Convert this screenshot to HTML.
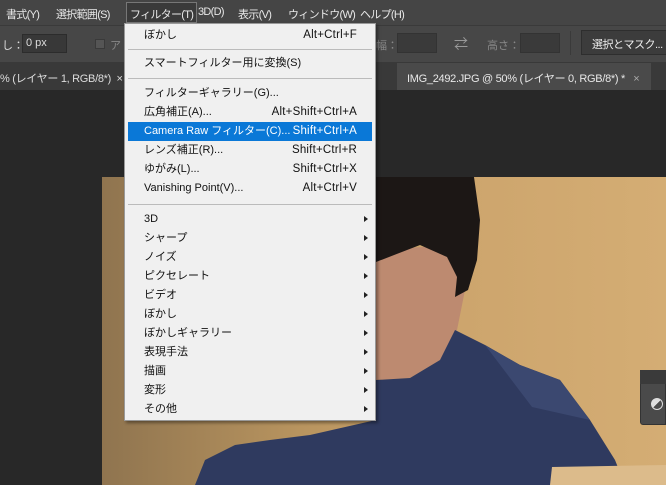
<!DOCTYPE html>
<html><head><meta charset="utf-8"><style>
*{margin:0;padding:0;box-sizing:border-box}
body{width:666px;height:485px;overflow:hidden;background:#282828;font-family:"Liberation Sans","Noto Sans CJK JP",sans-serif;font-size:11px;position:relative}
.a{position:absolute}
.mb{left:0;top:0;width:666px;height:25px;background:#454545;color:#e8e8e8}
.mb span{position:absolute;top:6px;font-size:11px;letter-spacing:-0.7px;white-space:nowrap}
.ob{left:0;top:25px;width:666px;height:37px;background:#474747;border-top:1px solid #3a3a3a;color:#ddd}
.tb{left:0;top:62px;width:666px;height:28px;background:#393939;color:#ddd}
.menu{left:124px;top:23px;width:252px;height:398px;background:#f0f0f0;border:1px solid #999;box-shadow:2px 2px 3px rgba(0,0,0,.4);color:#111}
.it{position:absolute;left:0;width:250px;height:19px;line-height:19px;font-size:11px;white-space:nowrap}
.it .l{position:absolute;left:19px}
.it .r{position:absolute;right:18px;font-size:11.5px;letter-spacing:0.2px}
.it .ar{position:absolute;right:7px;top:6px;width:0;height:0;border-left:4px solid #222;border-top:3.5px solid transparent;border-bottom:3.5px solid transparent}
.sep{position:absolute;left:3px;width:244px;height:1px;background:#bbb}
</style></head><body>
<div class="a" style="left:582px;top:0;width:84px;height:3px;background:#555"></div>
<div class="a mb">
<span style="left:6px">書式(Y)</span><span style="left:56px">選択範囲(S)</span>
<span style="left:126px;top:2px;width:71px;height:21px;padding:3px 3px;border:1px solid #777;background:#3a3a3a">フィルター(T)</span>
<span style="left:198px">3D(D)</span><span style="left:238px">表示(V)</span><span style="left:288px">ウィンドウ(W)</span><span style="left:360px">ヘルプ(H)</span>
</div>
<div class="a ob">
<span class="a" style="left:2px;top:11px">し：</span>
<div class="a" style="left:22px;top:8px;width:45px;height:19px;background:#383838;border:1px solid #2c2c2c;padding:2px 3px;font-size:11px">0 px</div>
<div class="a" style="left:95px;top:13px;width:10px;height:10px;background:#555;border:1px solid #3a3a3a"></div>
<span class="a" style="left:110px;top:11px;color:#888">ア</span>
<span class="a" style="left:376px;top:11px;color:#888">幅：</span>
<div class="a" style="left:397px;top:7px;width:40px;height:20px;background:#3a3a3a;border:1px solid #333"></div>
<span class="a" style="left:454px;top:8px;color:#999;font-size:14px">⇄</span>
<span class="a" style="left:487px;top:11px;color:#888">高さ：</span>
<div class="a" style="left:520px;top:7px;width:40px;height:20px;background:#3a3a3a;border:1px solid #333"></div>
<div class="a" style="left:570px;top:5px;width:1px;height:24px;background:#3a3a3a"></div>
<div class="a" style="left:581px;top:4px;width:90px;height:25px;background:#3c3c3c;border:1px solid #2e2e2e;padding:5px 10px;color:#eee;white-space:nowrap;letter-spacing:-0.5px">選択とマスク...</div>
</div>
<div class="a tb">
<span class="a" style="left:0;top:8px;white-space:nowrap;letter-spacing:-0.3px">% (レイヤー 1, RGB/8*)&nbsp; ×</span>
<div class="a" style="left:397px;top:1px;width:254px;height:27px;background:#4a4a4a"></div>
<span class="a" style="left:407px;top:8px;white-space:nowrap;color:#e8e8e8;letter-spacing:-0.3px">IMG_2492.JPG @ 50% (レイヤー 0, RGB/8*) *&nbsp;&nbsp; <span style="color:#aaa">×</span></span>
</div>
<svg class="a" style="left:102px;top:177px" width="564" height="308" viewBox="0 0 564 308">
<defs><linearGradient id="w" x1="0" x2="1"><stop offset="0" stop-color="#8f744f"/><stop offset=".35" stop-color="#b8945f"/><stop offset=".6" stop-color="#cca46c"/><stop offset="1" stop-color="#d4ad74"/></linearGradient></defs>
<rect width="564" height="308" fill="url(#w)"/>
<path d="M274 73 L353 68 L363 113 L355 153 L338 183 L308 201 L274 203Z" fill="#bd8a70"/>
<path d="M274 0 L372 0 L378 43 L375 83 L366 113 L353 120 L355 100 L345 80 L318 68 L274 85Z" fill="#1c1715"/>
<path d="M274 203 L308 201 L338 183 L353 153 L383 168 L418 188 L458 203 L488 243 L513 283 L523 308 L93 308 L103 283 L133 268 L168 263 L208 258 L274 243Z" fill="#2f3a5f"/>
<path d="M383 168 L418 188 L458 203 L488 243 L430 230 Z" fill="#3b4870"/>
<path d="M450 290 L564 288 L564 308 L448 308Z" fill="#dcbb8b"/>
</svg>
<div class="a" style="left:640px;top:370px;width:26px;height:55px;background:#4a4a4a;border:1px solid #333;border-radius:3px 0 0 3px"></div>
<div class="a" style="left:640px;top:370px;width:26px;height:14px;background:#3a3a3a"></div>
<div class="a" style="left:651px;top:398px;width:12px;height:12px;border-radius:50%;border:1.5px solid #ddd;background:linear-gradient(135deg,#ddd 50%,transparent 50%)"></div>
<div class="a menu">
<div class="it" style="top:2px"><span class="l">ぼかし</span><span class="r">Alt+Ctrl+F</span></div>
<div class="sep" style="top:25px"></div>
<div class="it" style="top:30px"><span class="l">スマートフィルター用に変換(S)</span></div>
<div class="sep" style="top:54px"></div>
<div class="it" style="top:60px"><span class="l">フィルターギャラリー(G)...</span></div>
<div class="it" style="top:79px"><span class="l">広角補正(A)...</span><span class="r">Alt+Shift+Ctrl+A</span></div>
<div class="it" style="top:98px;background:#0a78d7;color:#fff;left:3px;width:244px"><span class="l" style="left:16px">Camera Raw フィルター(C)...</span><span class="r" style="right:15px">Shift+Ctrl+A</span></div>
<div class="it" style="top:117px"><span class="l">レンズ補正(R)...</span><span class="r">Shift+Ctrl+R</span></div>
<div class="it" style="top:136px"><span class="l">ゆがみ(L)...</span><span class="r">Shift+Ctrl+X</span></div>
<div class="it" style="top:155px"><span class="l">Vanishing Point(V)...</span><span class="r">Alt+Ctrl+V</span></div>
<div class="sep" style="top:180px"></div>
<div class="it" style="top:186px"><span class="l">3D</span><span class="ar"></span></div>
<div class="it" style="top:205px"><span class="l">シャープ</span><span class="ar"></span></div>
<div class="it" style="top:224px"><span class="l">ノイズ</span><span class="ar"></span></div>
<div class="it" style="top:243px"><span class="l">ピクセレート</span><span class="ar"></span></div>
<div class="it" style="top:262px"><span class="l">ビデオ</span><span class="ar"></span></div>
<div class="it" style="top:281px"><span class="l">ぼかし</span><span class="ar"></span></div>
<div class="it" style="top:300px"><span class="l">ぼかしギャラリー</span><span class="ar"></span></div>
<div class="it" style="top:319px"><span class="l">表現手法</span><span class="ar"></span></div>
<div class="it" style="top:338px"><span class="l">描画</span><span class="ar"></span></div>
<div class="it" style="top:357px"><span class="l">変形</span><span class="ar"></span></div>
<div class="it" style="top:376px"><span class="l">その他</span><span class="ar"></span></div>
</div>
</body></html>
